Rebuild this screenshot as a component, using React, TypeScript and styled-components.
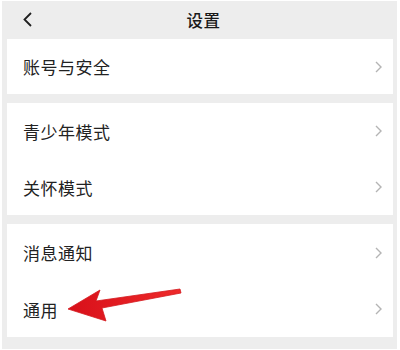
import styled, { createGlobalStyle } from "styled-components"

const GlobalStyle = createGlobalStyle`
  html, body {
    margin: 0;
    padding: 0;
    background: #ffffff;
  }
  * { box-sizing: border-box; }
`

const Frame = styled.div`
  width: 400px;
  height: 350px;
  padding: 1px 3px 1px 2px;
  background: #ffffff;
  font-family: "Noto Sans CJK SC", "Noto Sans", sans-serif;
`

const Screen = styled.div`
  height: 100%;
  background: #ededed;
  display: flex;
  flex-direction: column;
  padding: 0 4px 0 5px;
`

const Header = styled.div`
  height: 37px;
  flex-shrink: 0;
  display: flex;
  align-items: center;
  justify-content: center;
  position: relative;
  margin: 0 -4px 1px -5px;
`

const BackButton = styled.div`
  position: absolute;
  left: 20px;
  top: 11px;
  width: 12px;
  height: 15px;
  display: flex;
`

const Title = styled.div`
  font-size: 16.5px;
  font-weight: 500;
  color: #1a1a1a;
  letter-spacing: 0.5px;
  margin-left: 8px;
`

const Card = styled.div<{ gapAfter: number }>`
  background: #ffffff;
  margin-bottom: ${({ gapAfter }) => gapAfter}px;
  display: flex;
  flex-direction: column;
`

const Row = styled.div<{ h: number }>`
  height: ${({ h }) => h}px;
  display: flex;
  align-items: center;
  justify-content: space-between;
  padding: 0 11px 0 16px;
  position: relative;
`

const Label = styled.span`
  font-size: 17px;
  color: #222222;
  letter-spacing: 0.5px;
`

const Pointer = styled.svg`
  position: absolute;
  left: 46px;
  top: -1px;
  overflow: visible;
`

const Chevron = () => (
  <svg width="7" height="12" viewBox="0 0 7 12">
    <polyline points="1,1 6,6 1,11" fill="none" stroke="#b4b4b4" strokeWidth="1.4" />
  </svg>
)

const sections = [
  { rows: [{ label: "账号与安全", h: 55 }], gap: 9 },
  { rows: [{ label: "青少年模式", h: 56 }, { label: "关怀模式", h: 56 }], gap: 9 },
  { rows: [{ label: "消息通知", h: 57 }, { label: "通用", h: 56 }], gap: 0 },
]

export default function App() {
  return (
    <>
      <GlobalStyle />
      <Frame>
        <Screen>
          <Header>
            <BackButton>
              <svg width="12" height="15" viewBox="0 0 12 15">
                <polyline points="9,1 2.5,7.5 9,14" fill="none" stroke="#1f1f1f" strokeWidth="1.8" />
              </svg>
            </BackButton>
            <Title>设置</Title>
          </Header>
          {sections.map((section, i) => (
            <Card key={i} gapAfter={section.gap}>
              {section.rows.map((row) => (
                <Row key={row.label} h={row.h}>
                  <Label>{row.label}</Label>
                  <Chevron />
                  {row.label === "通用" && (
                    <Pointer width="130" height="42" viewBox="0 0 130 42">
                      <defs>
                        <linearGradient id="arrowRed" x1="0" y1="0" x2="1" y2="0">
                          <stop offset="0" stopColor="#d8101a" />
                          <stop offset="1" stopColor="#ee2a2a" />
                        </linearGradient>
                      </defs>
                      <polygon
                        points="15,29 47,10 43,21 127,9 128,13 49,28 53,41"
                        fill="url(#arrowRed)"
                        stroke="#d41a1f"
                        strokeWidth="0.8"
                        strokeLinejoin="round"
                      />
                    </Pointer>
                  )}
                </Row>
              ))}
            </Card>
          ))}
        </Screen>
      </Frame>
    </>
  )
}
